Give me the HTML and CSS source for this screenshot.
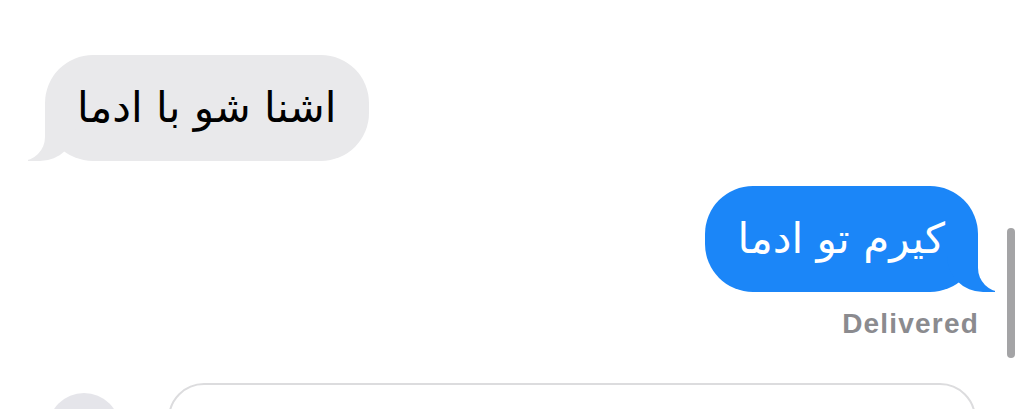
FILE: index.html
```html
<!DOCTYPE html>
<html lang="fa">
<head>
<meta charset="utf-8">
<title>Messages</title>
<link rel="stylesheet" href="styles.css">
</head>
<body>
<div class="screen">
  <div class="thread">
    <div class="bubble received" dir="rtl">اشنا شو با ادما</div>
    <div class="bubble sent" dir="rtl">کیرم تو ادما</div>
    <div class="status">Delivered</div>
  </div>
  <div class="composer">
    <div class="app-button"></div>
    <div class="input-field"></div>
  </div>
  <div class="scrollbar"></div>
</div>
</body>
</html>
```

FILE: styles.css
```css
html, body {
  margin: 0;
  padding: 0;
  background: #ffffff;
}

.screen {
  position: relative;
  width: 1024px;
  height: 409px;
  overflow: hidden;
  font-family: "DejaVu Sans", "Noto Sans", sans-serif;
}

.thread {
  display: flex;
  flex-direction: column;
  padding: 55px 46px 0 45px;
}

.bubble {
  position: relative;
  box-sizing: border-box;
  height: 106px;
  display: flex;
  align-items: center;
  padding: 0 33px 0 32px;
  border-radius: 48px;
  font-size: 42px;
  line-height: 50px;
  z-index: 0;
}

.bubble::before,
.bubble::after {
  content: "";
  position: absolute;
  bottom: 0;
  z-index: -1;
}

.received {
  align-self: flex-start;
  background: #e9e9eb;
  color: #000000;
}

.received::before {
  left: -17px;
  width: 48px;
  height: 48px;
  background: #e9e9eb;
  border-bottom-right-radius: 36px;
}

.received::after {
  left: -62px;
  width: 62px;
  height: 48px;
  background: #ffffff;
  border-bottom-right-radius: 24px;
}

.sent {
  align-self: flex-end;
  margin-top: 25px;
  background: #1b86f8;
  color: #ffffff;
}

.sent::before {
  right: -17px;
  width: 48px;
  height: 48px;
  background: #1b86f8;
  border-bottom-left-radius: 36px;
}

.sent::after {
  right: -62px;
  width: 62px;
  height: 48px;
  background: #ffffff;
  border-bottom-left-radius: 24px;
}

.status {
  align-self: flex-end;
  margin-top: 16px;
  margin-right: -1px;
  font-family: "Liberation Sans", Arial, sans-serif;
  font-weight: 700;
  font-size: 28px;
  line-height: 32px;
  letter-spacing: 1.2px;
  color: #8b8b8f;
}

.composer {
  display: flex;
  align-items: flex-start;
  gap: 48px;
  padding: 43px 48px 0 48px;
}

.app-button {
  flex: none;
  width: 72px;
  height: 72px;
  margin-top: 10px;
  border-radius: 50%;
  background: #e5e5ea;
}

.input-field {
  flex: none;
  box-sizing: border-box;
  width: 808px;
  height: 80px;
  border: 2px solid #dcdcde;
  border-radius: 36px;
}

.scrollbar {
  position: absolute;
  left: 1007px;
  top: 228px;
  width: 8px;
  height: 130px;
  border-radius: 4px;
  background: #a4a4a6;
}
```
